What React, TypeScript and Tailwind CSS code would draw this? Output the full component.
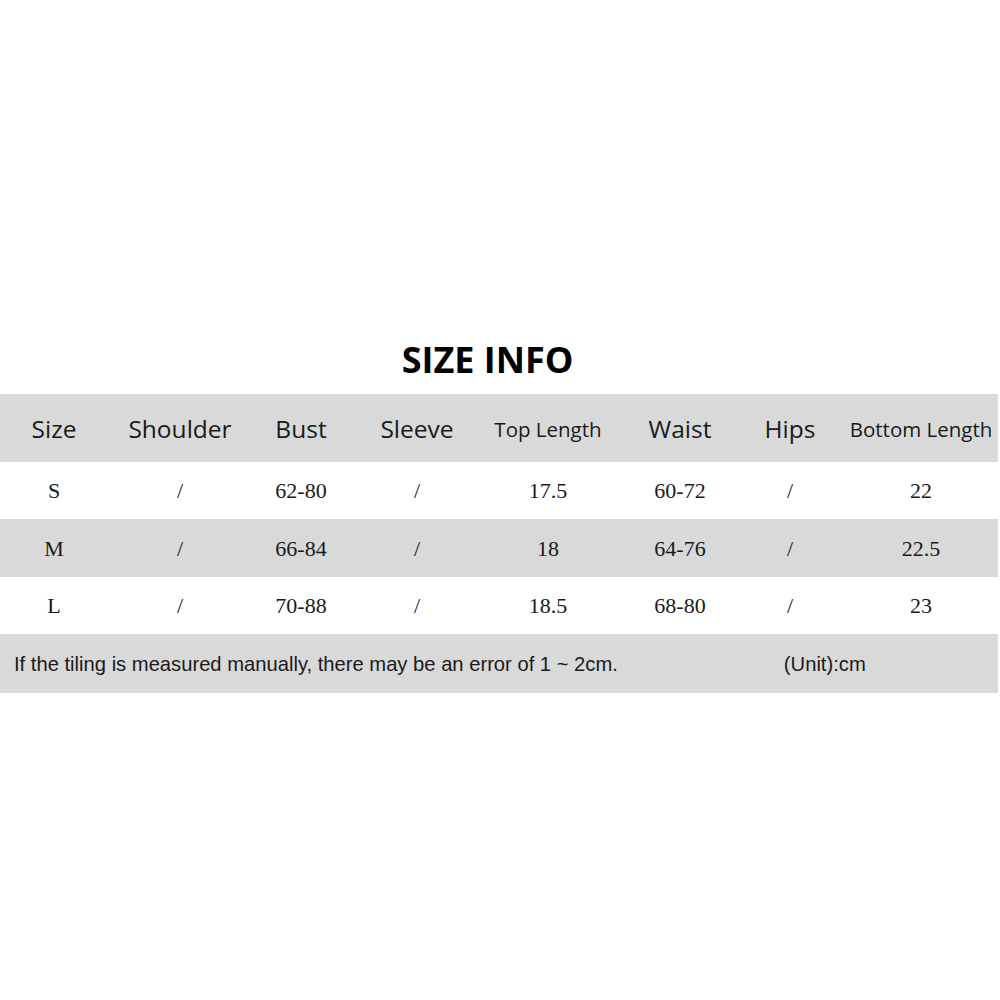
const cols = "grid grid-cols-[108px_144px_98px_134px_128px_136px_84px_166px]";

const headers = ["Size", "Shoulder", "Bust", "Sleeve", "Top Length", "Waist", "Hips", "Bottom Length"];

const rows = [
  ["S", "/", "62-80", "/", "17.5", "60-72", "/", "22"],
  ["M", "/", "66-84", "/", "18", "64-76", "/", "22.5"],
  ["L", "/", "70-88", "/", "18.5", "68-80", "/", "23"],
];

export default function App() {
  return (
    <div className="h-[1000px] w-[1000px] bg-white pt-[340px]">
      <h1 className="h-10 pr-[25px] text-center font-['Open_Sans',sans-serif] text-[36px] font-bold leading-10 text-black">
        SIZE INFO
      </h1>

      <div className="mt-[14px] w-[998px]">
        <div className={`${cols} h-[68px] items-center bg-[#d9d9d9] pt-[2px] font-['Open_Sans',sans-serif] font-medium text-[#1a1a1a]`}>
          {headers.map((h, i) => (
            <div
              key={h}
              className={
                (i === 4 || i === 7 ? "text-[20.5px] " : "text-[24.5px] ") +
                (i === 7 ? "pl-[12px] whitespace-nowrap " : "") +
                "text-center"
              }
            >
              {h}
            </div>
          ))}
        </div>

        {rows.map((r, ri) => (
          <div
            key={r[0]}
            className={`${cols} items-center font-['Liberation_Serif',serif] text-[22px] text-[#1a1a1a] ${
              ri === 1 ? "h-[58px] bg-[#d9d9d9]" : "h-[57px] bg-white"
            }`}
          >
            {r.map((c, i) => (
              <div key={i} className={(i === 7 ? "pl-[12px] " : "") + "text-center"}>
                {c}
              </div>
            ))}
          </div>
        ))}

        <div className="flex h-[59px] items-center bg-[#d9d9d9] pl-[14px] pt-[2px] font-['Liberation_Sans',sans-serif] text-[20.2px] text-[#1a1a1a]">
          <span>If the tiling is measured manually, there may be an error of 1 ~ 2cm.</span>
          <span className="ml-[166px]">(Unit):cm</span>
        </div>
      </div>
    </div>
  );
}
